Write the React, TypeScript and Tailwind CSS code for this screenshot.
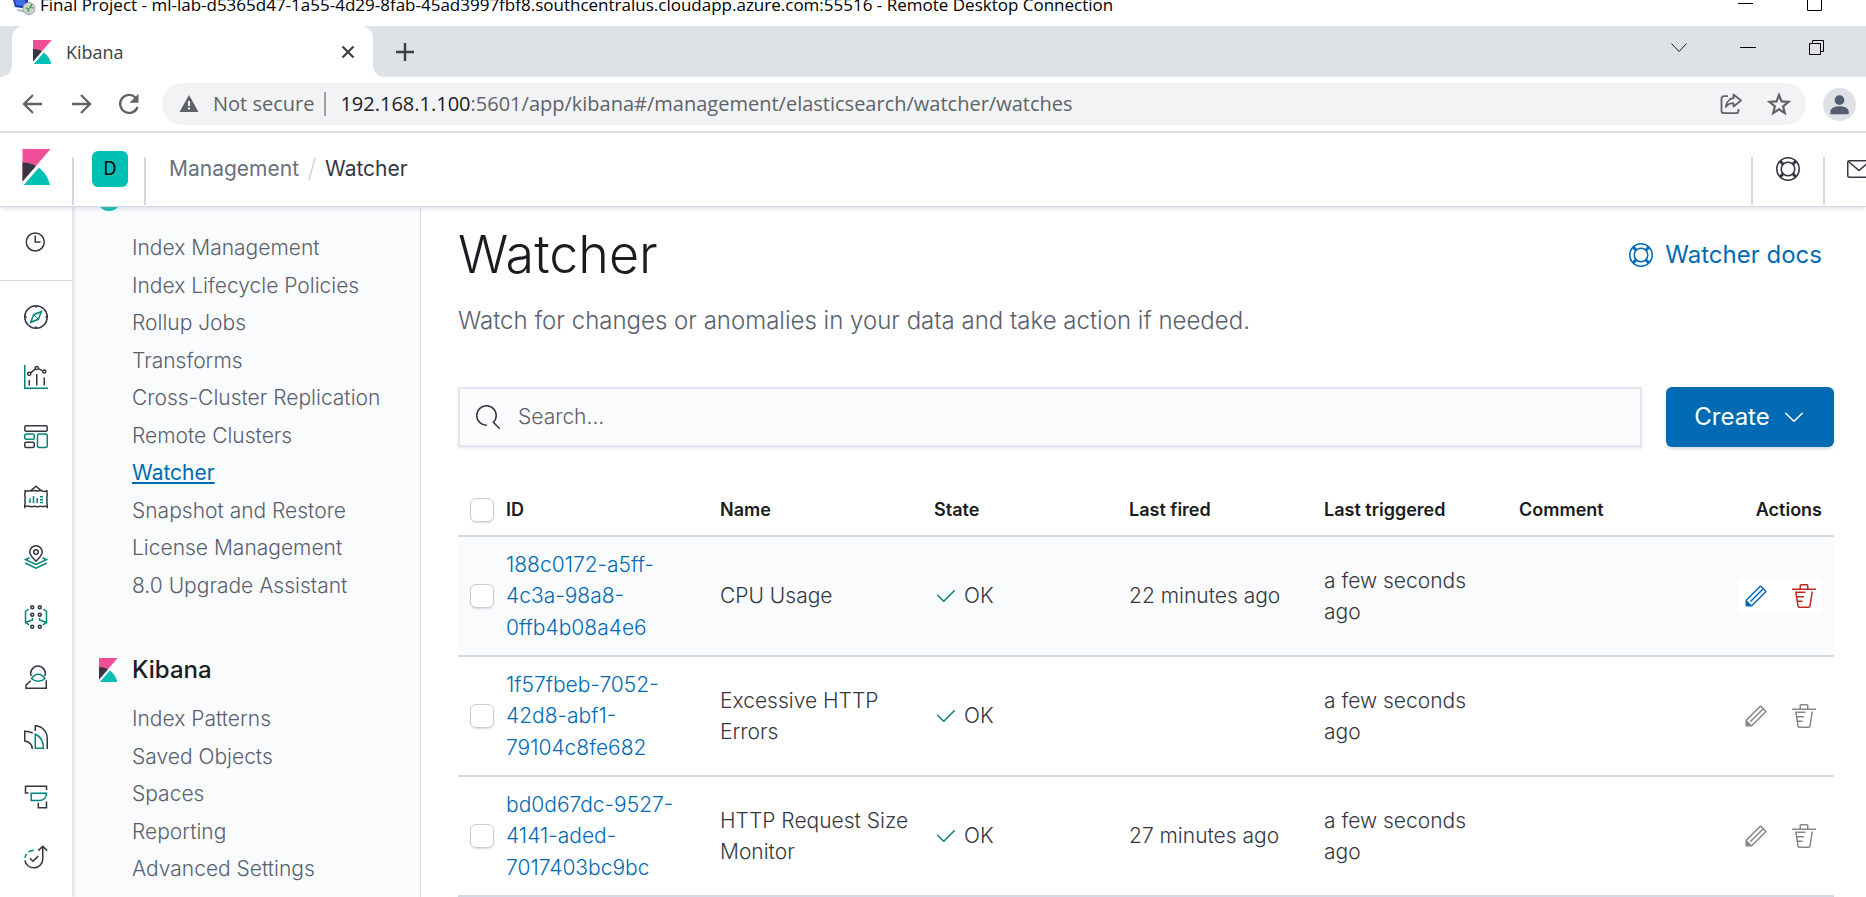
import type { ReactNode } from "react";

const DARK = "#343741";
const GREEN = "#00857a";

function KibanaLogo({ className }: { className: string }) {
  return (
    <svg viewBox="0 0 32 32" className={className} aria-hidden="true">
      <path fill="#f04e98" d="M4 0v28.789L28.935.017z" />
      <path fill="#343741" d="M4 12v16.789l11.906-13.738A24.721 24.721 0 004 12" />
      <path
        fill="#00bfb3"
        d="M18.479 16.664L6.268 30.754l-1.073 1.237h23.191c-1.252-6.292-4.883-11.719-9.908-15.327"
      />
    </svg>
  );
}

function LifeBuoy() {
  return (
    <svg viewBox="0 0 16 16" className="size-6 shrink-0" fill="currentColor" aria-hidden="true">
      <path d="M13.6 12.186l-1.357-1.358c-.025-.025-.058-.034-.084-.056.53-.794.84-1.746.84-2.773a4.977 4.977 0 00-.84-2.772c.026-.02.059-.03.084-.056L13.6 3.813a6.96 6.96 0 010 8.373zM8 15a6.956 6.956 0 01-4.186-1.4l1.358-1.358c.025-.025.035-.057.055-.084A4.978 4.978 0 008 13a4.98 4.98 0 002.773-.84c.02.026.03.058.056.083l1.357 1.358A6.955 6.955 0 018 15zm-5.601-2.813a6.963 6.963 0 010-8.373l1.359 1.358c.024.025.057.035.084.055A4.97 4.97 0 003 8c0 1.027.31 1.98.842 2.773-.027.022-.06.031-.084.056l-1.36 1.358zm5.6-.187A4 4 0 118 4a4 4 0 010 8zM8 1c1.573 0 3.019.525 4.187 1.4l-1.357 1.358c-.025.025-.035.057-.056.084A4.979 4.979 0 008 3a4.979 4.979 0 00-2.773.842c-.021-.027-.03-.059-.055-.084L3.814 2.4A6.957 6.957 0 018 1zm0-1a8.001 8.001 0 10.003 16.002A8.001 8.001 0 008 0z" />
    </svg>
  );
}

function NavIcon({ label, children }: { label: string; children: ReactNode }) {
  return (
    <a href="#" aria-label={label} className="flex h-[60px] items-center pl-6">
      <svg viewBox="0 0 24 24" className="size-6" fill="none" stroke={DARK} strokeWidth="1.5" aria-hidden="true">
        {children}
      </svg>
    </a>
  );
}

function TitleBar() {
  return (
    <div className="flex h-[26px] shrink-0 items-start overflow-hidden bg-white pl-3">
      <svg viewBox="0 0 24 16" className="h-4 w-6 shrink-0" aria-hidden="true">
        <path d="M1 0h15v9l-13-2z" fill="#1d3fae" />
        <path d="M3 0h10v6L4 5z" fill="#3f6fe8" />
        <path d="M5 9l7 1 1 3-8-2z" fill="#b9bec6" />
        <circle cx="17" cy="8.500" r="6" fill="#cfd3d6" stroke="#9aa0a6" />
        <path d="M14 8l3 1-1 3M20 4l-2 3 3 1" fill="none" stroke="#3fae3a" strokeWidth="1.500" />
      </svg>
      <span className="-mt-[7px] ml-1 text-[17px] leading-6 whitespace-nowrap text-black">
        Final Project - ml-lab-d5365d47-1a55-4d29-8fab-45ad3997fbf8.southcentralus.cloudapp.azure.com:55516 - Remote
        Desktop Connection
      </span>
      <div className="ml-auto flex gap-[54px] pr-11">
        <svg viewBox="0 0 15 12" className="h-3 w-[15px]" aria-hidden="true">
          <path d="M0 3.500h15" stroke="#000" />
        </svg>
        <svg viewBox="0 0 15 12" className="h-3 w-[15px]" aria-hidden="true">
          <path d="M.5 0v10.500h14V0" stroke="#000" fill="none" />
        </svg>
      </div>
    </div>
  );
}

function TabStrip() {
  return (
    <div className="flex h-[51px] shrink-0 bg-[#dee1e6]">
      <svg viewBox="0 0 12 51" className="h-[51px] w-3" aria-hidden="true">
        <path d="M12 39v12H0c7 0 12-5 12-12z" fill="#fff" />
      </svg>
      <div className="flex w-[361px] items-center rounded-t-xl bg-white pr-[17px] pl-[18px]">
        <KibanaLogo className="size-6" />
        <span className="ml-3 text-lg text-[#3c4043]">Kibana</span>
        <button type="button" aria-label="Close tab" className="ml-auto">
          <svg viewBox="0 0 16 16" className="size-4" aria-hidden="true">
            <path d="M2.500 2.500l11 11M13.500 2.500l-11 11" stroke="#3c4043" strokeWidth="2.200" />
          </svg>
        </button>
      </div>
      <svg viewBox="0 0 12 51" className="h-[51px] w-3" aria-hidden="true">
        <path d="M0 39v12h12C5 51 0 46 0 39z" fill="#fff" />
      </svg>
      <button type="button" aria-label="New tab" className="ml-[7px]">
        <svg viewBox="0 0 26 26" className="size-[26px]" aria-hidden="true">
          <path d="M13 4v18M4 13h18" stroke="#3c4043" strokeWidth="2.500" />
        </svg>
      </button>
      <div className="ml-auto flex items-start gap-[53px] pt-[13px] pr-[41px]">
        <svg viewBox="0 0 16 16" className="size-4" fill="none" stroke="#202124" aria-hidden="true">
          <path d="M.5 4.500L8 12.500l7.500-8" />
        </svg>
        <svg viewBox="0 0 16 16" className="size-4" stroke="#000" aria-hidden="true">
          <path d="M0 8.500h16" />
        </svg>
        <svg viewBox="0 0 16 16" className="size-4" fill="none" stroke="#000" aria-hidden="true">
          <path d="M.5 4.500h11v11H.5zM3.500 4.500v-3h11v11h-3" />
        </svg>
      </div>
    </div>
  );
}

function AddressBar() {
  return (
    <div className="flex h-[56px] shrink-0 items-center border-b-2 border-[#dcdddf] bg-white pl-[21px]">
      <div className="flex gap-6 text-[#5f6368]">
        <button type="button" aria-label="Back">
          <svg viewBox="0 0 24 24" className="size-6" fill="none" stroke="currentColor" strokeWidth="2.300" aria-hidden="true">
            <path d="M21 12H3M12 3l-9 9 9 9" />
          </svg>
        </button>
        <button type="button" aria-label="Forward">
          <svg viewBox="0 0 24 24" className="size-6" fill="none" stroke="currentColor" strokeWidth="2.300" aria-hidden="true">
            <path d="M3 12h18M12 3l9 9-9 9" />
          </svg>
        </button>
        <button type="button" aria-label="Reload">
          <svg viewBox="0 0 24 24" className="size-6" aria-hidden="true">
            <path d="M18.500 5.500A9 9 0 1020.600 15" fill="none" stroke="currentColor" strokeWidth="2.300" />
            <path d="M21.500 1.800v9H12.500z" fill="currentColor" />
          </svg>
        </button>
      </div>
      <div className="ml-[21px] flex h-[42px] grow items-center rounded-full bg-[#f1f3f4] pr-[15px] pl-[17px] text-[#5f6368]">
        <svg viewBox="0 0 20 18" className="h-[18px] w-5" aria-hidden="true">
          <path d="M10 0l9.500 17H.5z" fill="#5f6368" />
          <path d="M10 6v5M10 12.500v2" stroke="#f1f3f4" strokeWidth="2" />
        </svg>
        <span className="ml-[14px] text-xl whitespace-nowrap">Not secure</span>
        <span className="mr-[14px] ml-[10px] h-6 w-0.5 bg-[#9aa0a6]" />
        <span className="text-xl whitespace-nowrap">
          <span className="text-[#202124]">192.168.1.100</span>:5601/app/kibana#/management/elasticsearch/watcher/watches
        </span>
        <div className="ml-auto flex gap-6">
          <button type="button" aria-label="Share">
            <svg viewBox="0 0 24 24" className="size-6" fill="none" stroke="currentColor" strokeWidth="1.800" strokeLinejoin="round" aria-hidden="true">
              <path d="M9 4.200H5A2.500 2.500 0 002.500 6.700v12A2.500 2.500 0 005 21.200h12a2.500 2.500 0 002.500-2.500V17" />
              <path d="M14.500 2.500l7.500 6-7.500 6V11.200C11 11.200 8.500 12.500 6.800 15c.5-4 3-8.500 7.700-9z" />
            </svg>
          </button>
          <button type="button" aria-label="Bookmark">
            <svg viewBox="0 0 24 24" className="size-6" fill="none" stroke="currentColor" strokeWidth="2.200" aria-hidden="true">
              <path d="M12 3l2.500 6.400 7 .5-5.400 4.400 1.700 6.800-5.800-3.700-5.800 3.700 1.700-6.800L2.500 9.900l7-.5z" />
            </svg>
          </button>
        </div>
      </div>
      <button type="button" aria-label="Profile" className="mr-[10px] ml-[17px]">
        <svg viewBox="0 0 34 34" className="size-[33px]" aria-hidden="true">
          <circle cx="17" cy="17" r="17" fill="#dee1e6" />
          <circle cx="17" cy="12.500" r="5" fill="#555d73" />
          <path d="M7.500 27v-2.500c0-4 5-5.800 9.500-5.800s9.500 1.800 9.500 5.800V27z" fill="#555d73" />
        </svg>
      </button>
    </div>
  );
}

function KibanaHeader() {
  return (
    <header className="relative z-10 flex h-[74px] shrink-0 items-center overflow-hidden border-b border-[#d3dae6] bg-white pb-px shadow-[0_3px_4px_-1px_rgba(152,162,179,0.3)]">
      <a href="#" aria-label="Kibana home" className="mb-1 w-[72px] shrink-0 pl-[18px]">
        <KibanaLogo className="size-9" />
      </a>
      <div className="flex h-12 w-[74px] shrink-0 justify-center self-end border-x-2 border-[#d3dae6] pl-0.5">
        <button type="button" className="-mt-1.5 size-9 rounded-md bg-[#00bfb3] text-lg text-black">
          D
        </button>
      </div>
      <nav aria-label="Breadcrumb" className="flex items-center pl-[23px] text-[21px] whitespace-nowrap">
        <a href="#" className="text-[#69707d]">
          Management
        </a>
        <svg viewBox="0 0 8 24" className="mx-[9px] h-6 w-2" aria-hidden="true">
          <path d="M1 23L7 1" stroke="#d3dae6" strokeWidth="1.800" />
        </svg>
        <span className="text-[#343741]">Watcher</span>
      </nav>
      <div className="ml-auto flex h-12 shrink-0 self-end text-[#343741]">
        <button type="button" aria-label="Help" className="flex w-[72px] justify-center border-l-2 border-[#d3dae6]">
          <LifeBuoy />
        </button>
        <button type="button" aria-label="News" className="w-[43px] overflow-hidden border-l-2 border-[#d3dae6] pl-[22px]">
          <svg viewBox="0 0 24 24" className="-mt-6 h-6 w-6 max-w-none" fill="none" stroke="currentColor" strokeWidth="1.500" aria-hidden="true">
            <rect x=".75" y="3.750" width="22.500" height="16.500" rx="1.500" />
            <path d="M1.500 4.500L12 13.500l10.500-9" />
          </svg>
        </button>
      </div>
    </header>
  );
}

function NavRail() {
  return (
    <nav aria-label="Apps" className="z-[5] w-[72px] shrink-0 bg-white shadow-[2px_0_3px_rgba(152,162,179,0.3)]">
      <a href="#" aria-label="Recently viewed" className="flex h-[74px] items-center border-b border-[#d3dae6] pb-1 pl-6">
        <svg viewBox="0 0 24 24" className="size-6" fill="none" stroke={DARK} strokeWidth="1.500" aria-hidden="true">
          <circle cx="11.250" cy="12" r="9" />
          <path d="M11.250 5.500V12H16.500" />
        </svg>
      </a>
      <div className="pt-[6px]">
        <NavIcon label="Discover">
          <circle cx="12" cy="12" r="11.250" />
          <path d="M12 .75v2M12 21.250v2M.75 12h2M21.250 12h2" />
          <path d="M17.300 6.700l-3 7.600-7.600 3 3-7.600z" stroke={GREEN} />
          <path d="M9.800 9.800l4.400 4.400" stroke={GREEN} strokeWidth="1" />
        </NavIcon>
        <NavIcon label="Visualize">
          <path d="M.75 0v23.250H24" stroke={GREEN} />
          <path d="M5.250 15v5.500M12.750 9v11.500M20.250 12.500v8" />
          <path d="M6.500 7.800l4.800-3.600M14.400 3.700l4 2" />
          <circle cx="5.250" cy="8.800" r="1.600" />
          <circle cx="12.750" cy="3" r="1.600" />
          <circle cx="20.250" cy="6.500" r="1.600" />
        </NavIcon>
        <NavIcon label="Dashboard">
          <rect x=".75" y=".75" width="22.500" height="5.500" rx="1.500" />
          <rect x=".75" y="9" width="9.500" height="5.200" rx="1.500" stroke={GREEN} />
          <rect x=".75" y="17.200" width="9.500" height="5.200" rx="1.500" />
          <rect x="13.500" y="9" width="9.750" height="13.400" rx="1.500" stroke={GREEN} />
        </NavIcon>
        <NavIcon label="Canvas">
          <path d="M6.500 5.800L12 1.200l5.500 4.600" />
          <path d="M.75 5.200c2 2 3.500 0 5.600.6s3.600-.8 5.650 0 3.700-.8 5.650 0 3.600 1.400 5.600-.6c-1.200 2.600.5 3.500-.2 5.700s.4 3.300-.1 5.200.8 3.300.3 6c-2-2-3.600 0-5.600-.6s-3.600.8-5.650 0-3.700.8-5.650 0-3.600-1.400-5.600.6c-.5-2.700.8-3.800.3-5.700s.6-3.200-.1-5.200S1.950 7.800.75 5.200z" />
          <path d="M6 13.500V18M9.500 11v7M13.200 13v5" stroke={GREEN} />
          <path d="M16 11.700h3M16 14.700h3M16 17.500h3" stroke={GREEN} />
        </NavIcon>
        <NavIcon label="Maps">
          <path d="M12 16.200C9 13 5.800 10.500 5.800 7a6.200 6.200 0 1112.400 0c0 3.500-3.200 6-6.200 9.200z" />
          <circle cx="12" cy="7" r="2.300" />
          <path d="M5.500 12.800l-4 1.900L12 19.500l10.500-4.800-4-1.900M1.300 18L12 23.200 22.700 18" stroke={GREEN} />
        </NavIcon>
        <NavIcon label="Machine Learning">
          <circle cx="8.250" cy="2.250" r="1.500" />
          <circle cx="15.750" cy="2.250" r="1.500" />
          <circle cx="8.250" cy="9.750" r="1.500" />
          <circle cx="15.750" cy="9.750" r="1.500" />
          <circle cx="8.250" cy="21.750" r="1.500" />
          <circle cx="15.750" cy="21.750" r="1.500" />
          <path d="M4.500 4.200L1.500 6.500v11l3.700 2.300M1.500 17.500l7-2.500V13M19.500 4.200l3 2.300v11l-3.700 2.300M22.500 17.500l-7-2.500V13" stroke={GREEN} />
        </NavIcon>
        <NavIcon label="Metrics">
          <path d="M7.200 11a7.300 7.300 0 1113.600 0" />
          <path d="M7.500 13.500c4-5.600 9.500-5.600 13.500 0-4 3.700-9.500 3.700-13.500 0z" stroke={GREEN} />
          <path d="M6.800 15.800L2 20.200v3h20.250v-8" />
        </NavIcon>
        <NavIcon label="Logs">
          <path d="M11.250 6V.75A12.500 12.500 0 0123.250 13v11" />
          <path d="M8.800 8.200C6.500 6.700 3.500 6.300.75 6.300V16C5 16.800 8.300 19.500 8.300 24" />
          <path d="M11.250 23.250V9.200c4.500 1.800 8 6.800 8.250 14.050z" stroke={GREEN} />
        </NavIcon>
        <NavIcon label="APM">
          <path d="M4.500 8H1.500V1.200h21V5" />
          <path d="M7.200 8.300h15.300c0 4.500-3 7.200-6.500 7.200H7.200z" stroke={GREEN} />
          <path d="M14.300 17.700v5h8.200V16.500" />
        </NavIcon>
        <NavIcon label="Uptime">
          <path d="M1 12.800c.2-1.500.7-2.700 1.500-3.800M4.500 6.900C6 5.800 7.800 5.200 9.800 5.200" stroke={GREEN} />
          <path d="M.9 15.500a9 9 0 0017.850-1.500V1.300M14.300 5.600l4.450-4.400 4.450 4.400M6 13.300l3 3 5.200-5.200" />
        </NavIcon>
      </div>
    </nav>
  );
}

const elasticsearchLinks = [
  "Index Management",
  "Index Lifecycle Policies",
  "Rollup Jobs",
  "Transforms",
  "Cross-Cluster Replication",
  "Remote Clusters",
  "Watcher",
  "Snapshot and Restore",
  "License Management",
  "8.0 Upgrade Assistant",
];
const kibanaLinks = ["Index Patterns", "Saved Objects", "Spaces", "Reporting", "Advanced Settings"];

function SideLink({ label }: { label: string }) {
  const active = label === "Watcher";
  return (
    <li className="flex items-center">
      <a
        href="#"
        aria-current={active ? "page" : undefined}
        className={
          active
            ? "font-normal text-[#006bb4] underline decoration-2 underline-offset-2"
            : "font-light text-[#59606d]"
        }
      >
        {label}
      </a>
    </li>
  );
}

function SideNav() {
  return (
    <nav aria-label="Management" className="w-[349px] shrink-0 overflow-hidden border-r border-[#d3dae6] bg-[#fafbfd] pl-6 text-[21px] whitespace-nowrap">
      <svg viewBox="0 0 24 4" className="ml-px h-1 w-6" aria-hidden="true">
        <path d="M3.060 0A12 12 0 0012 4 12 12 0 0020.940 0z" fill="#00bfb3" />
      </svg>
      <ul className="mt-[18px] ml-9 grid h-[375px] auto-rows-fr">
        {elasticsearchLinks.map((l) => (
          <SideLink key={l} label={l} />
        ))}
      </ul>
      <div className="mt-12 flex h-9 items-center gap-3">
        <KibanaLogo className="size-6" />
        <h2 className="text-2xl font-medium text-[#1a1c21]">Kibana</h2>
      </div>
      <ul className="mt-3 ml-9 grid h-[188px] auto-rows-fr">
        {kibanaLinks.map((l) => (
          <SideLink key={l} label={l} />
        ))}
      </ul>
    </nav>
  );
}

const watches = [
  { id: "188c0172-a5ff-4c3a-98a8-0ffb4b08a4e6", name: "CPU Usage", fired: "22 minutes ago" },
  { id: "1f57fbeb-7052-42d8-abf1-79104c8fe682", name: "Excessive HTTP Errors", fired: "" },
  { id: "bd0d67dc-9527-4141-aded-7017403bc9bc", name: "HTTP Request Size Monitor", fired: "27 minutes ago" },
];

function Check({ label }: { label: string }) {
  return (
    <input
      type="checkbox"
      aria-label={label}
      className="ml-3 block size-6 appearance-none rounded-md border border-[#c9cbcd] bg-white shadow-[0_2px_2px_-1px_rgba(152,162,179,0.4)]"
    />
  );
}

function WatchTable() {
  const head = "border-b-2 border-[#d3dae6] px-3 pt-0.5 font-semibold";
  const cell = "border-b-2 border-[#d3dae6] pl-3";
  return (
    <table className="mt-9 w-full table-fixed border-separate border-spacing-0 text-left text-[#343741]">
      <colgroup>
        <col className="w-[36px]" />
        <col className="w-[214px]" />
        <col className="w-[214px]" />
        <col className="w-[195px]" />
        <col className="w-[195px]" />
        <col className="w-[195px]" />
        <col className="w-[195px]" />
        <col className="w-[132px]" />
      </colgroup>
      <thead className="text-lg text-[#1a1c21]">
        <tr className="h-[54px]">
          <th className="border-b-2 border-[#d3dae6] pt-0.5">
            <Check label="Select all" />
          </th>
          <th className={head}>ID</th>
          <th className={head}>Name</th>
          <th className={head}>State</th>
          <th className={head}>Last fired</th>
          <th className={head}>Last triggered</th>
          <th className={head}>Comment</th>
          <th className={head + " text-right"}>Actions</th>
        </tr>
      </thead>
      <tbody className="text-[21px] leading-normal font-light">
        {watches.map((w, i) => (
          <tr key={w.id} className={i === 0 ? "h-[120px] bg-[#fafbfd]" : "h-[120px]"}>
            <td className="border-b-2 border-[#d3dae6]">
              <Check label={"Select " + w.name} />
            </td>
            <td className={cell + " pr-3"}>
              <a href="#" className="text-[#006bb4]">
                {w.id}
              </a>
            </td>
            <td className={cell}>{w.name}</td>
            <td className={cell}>
              <span className="flex items-center gap-1.5">
                <svg viewBox="0 0 16 16" className="size-6" fill={GREEN} aria-hidden="true">
                  <path d="M6.500 12a.502.502 0 01-.354-.146l-4-4a.502.502 0 01.708-.708L6.500 10.793l6.646-6.647a.502.502 0 01.708.708l-7 7A.502.502 0 016.500 12" />
                </svg>
                OK
              </span>
            </td>
            <td className={cell}>{w.fired}</td>
            <td className={cell + " pr-6"}>a few seconds ago</td>
            <td className={cell} />
            <td className="border-b-2 border-[#d3dae6] pr-3">
              <div className="ml-auto flex h-9 w-[84px] justify-between bg-white">
                <button
                  type="button"
                  aria-label="Edit"
                  className={i === 0 ? "flex w-9 items-center justify-center text-[#006bb4]" : "flex w-9 items-center justify-center text-[#868686]"}
                >
                  <svg viewBox="0 0 16 16" className="size-6" fill="currentColor" aria-hidden="true">
                    <path d="M12.148 3.148L11 2l-9 9v3h3l9-9-1.144-1.144-8.002 7.998a.502.502 0 01-.708-.708l8.002-7.998zM11 1c.256 0 .512.098.707.293l3 3a.999.999 0 010 1.414l-9 9A.997.997 0 015 15H2a1 1 0 01-1-1v-3c0-.265.105-.52.293-.707l9-9A.997.997 0 0111 1zM5 14H2v-3l3 3z" />
                  </svg>
                </button>
                <button
                  type="button"
                  aria-label="Delete"
                  className={i === 0 ? "flex w-9 items-center justify-center text-[#bd271e]" : "flex w-9 items-center justify-center text-[#868686]"}
                >
                  <svg viewBox="0 0 16 16" className="size-6" fill="currentColor" aria-hidden="true">
                    <path d="M11 3h5v1H0V3h5V1a1 1 0 011-1h4a1 1 0 011 1v2zm-7.056 8H7v1H4.100l.392 2.519c.042.269.254.458.493.458h6.030c.239 0 .451-.189.493-.458l1.498-9.576H14l-1.504 9.730c-.116.747-.74 1.304-1.481 1.304h-6.030c-.741 0-1.365-.557-1.481-1.304l-1.511-9.730H9V5.950H3.157L3.476 8H8v1H3.632l.312 2zM6 3h4V1H6v2z" />
                  </svg>
                </button>
              </div>
            </td>
          </tr>
        ))}
      </tbody>
    </table>
  );
}

export default function App() {
  return (
    <div className="flex h-screen flex-col overflow-hidden bg-white font-['Open_Sans',sans-serif]">
      <TitleBar />
      <TabStrip />
      <AddressBar />
      <div className="flex min-h-0 grow flex-col font-['Inter',sans-serif]">
        <KibanaHeader />
        <div className="flex min-h-0 grow">
          <NavRail />
          <SideNav />
          <main className="min-w-0 grow overflow-hidden pt-[18px] pr-8 pl-[37px]">
            <div className="flex items-center justify-between">
              <h1 className="text-[52px] leading-[60px] font-light text-[#1a1c21]">Watcher</h1>
              <a href="#" className="flex items-center gap-3 pr-3 text-2xl text-[#006bb4]">
                <LifeBuoy />
                Watcher docs
              </a>
            </div>
            <p className="mt-[18px] text-2xl leading-9 font-light text-[#59606d]">
              Watch for changes or anomalies in your data and take action if needed.
            </p>
            <div className="mt-12 flex gap-6">
              <label className="flex h-[60px] grow items-center gap-[18px] border-2 border-[#e3e6f0] bg-[#fbfcfd] px-4 shadow-[0_2px_3px_rgba(152,162,179,0.2)]">
                <svg viewBox="0 0 16 16" className="size-6 shrink-0" fill={DARK} aria-hidden="true">
                  <path d="M11.271 11.978l3.872 3.873a.502.502 0 00.708 0 .502.502 0 000-.708l-3.565-3.564c2.380-2.747 2.267-6.923-.342-9.532-2.730-2.730-7.170-2.730-9.898 0-2.728 2.729-2.728 7.170 0 9.900a6.955 6.955 0 004.949 2.050.5.5 0 000-1 5.960 5.960 0 01-4.242-1.757 6.010 6.010 0 010-8.486 6.004 6.004 0 018.484 0 6.010 6.010 0 010 8.486.5.5 0 00-.025.738z" />
                </svg>
                <input
                  type="search"
                  aria-label="Search"
                  placeholder="Search..."
                  className="min-w-0 grow bg-transparent text-[21px] font-light outline-none placeholder:text-[#59606d]"
                />
              </label>
              <button
                type="button"
                className="flex h-[60px] w-[168px] items-center justify-center gap-3 rounded-md bg-[#006bb4] text-2xl text-white shadow-[0_2px_3px_rgba(152,162,179,0.4)]"
              >
                Create
                <svg viewBox="0 0 24 24" className="size-6" fill="none" stroke="currentColor" strokeWidth="1.500" strokeLinecap="round" strokeLinejoin="round" aria-hidden="true">
                  <path d="M3.700 8.200L12 16.200l8.300-8" />
                </svg>
              </button>
            </div>
            <WatchTable />
          </main>
        </div>
      </div>
    </div>
  );
}
